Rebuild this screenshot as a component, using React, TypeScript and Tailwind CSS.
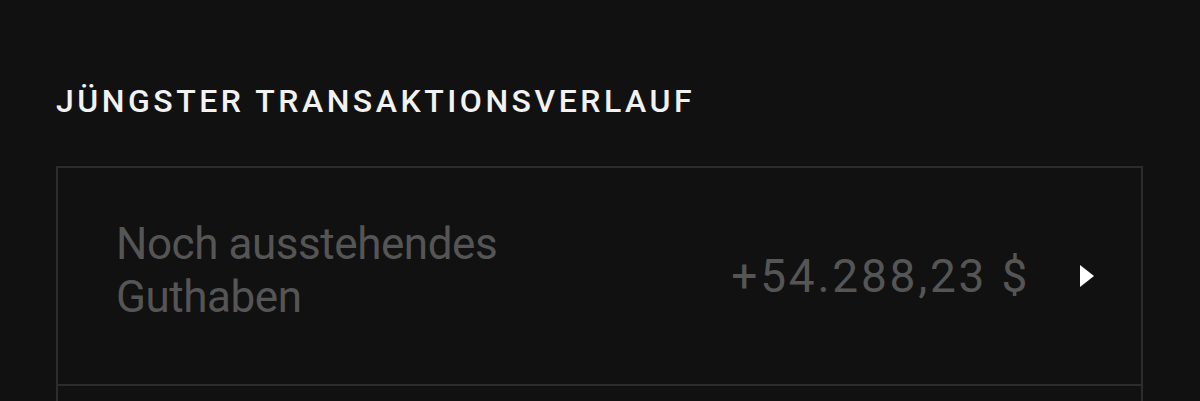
const rows = [
  { label: "Noch ausstehendes Guthaben", amount: "+54.288,23 $" },
  { label: "", amount: "" },
];

function Caret() {
  return (
    <svg width="14" height="22" viewBox="0 0 14 22" className="shrink-0">
      <path d="M0 0 L14 11 L0 22 Z" fill="#ffffff" />
    </svg>
  );
}

export default function App() {
  return (
    <div className="h-[401px] overflow-hidden bg-[#111111] pl-[56px] pr-[57px] pt-[81px] font-['Roboto',sans-serif]">
      <h2 className="text-[32px] leading-[40px] font-medium uppercase tracking-[0.11em] text-[#f2f2f2]">
        Jüngster Transaktionsverlauf
      </h2>

      <div className="mt-[45px] border-2 border-[#2c2c2c]">
        {/* first row */}
        <div className="flex h-[218px] items-center border-b-2 border-[#2c2c2c] pl-[58px] pr-[47px]">
          <p className="mb-[10px] w-[440px] text-[44px] leading-[53px] tracking-[-0.01em] text-[#555555]">
            {rows[0].label}
          </p>
          <div className="ml-auto flex items-center gap-[50px]">
            <span className="text-[46px] leading-[53px] tracking-[0.06em] text-[#555555]">
              {rows[0].amount}
            </span>
            <Caret />
          </div>
        </div>
        {/* next row, cut off */}
        <div className="h-[120px]" />
      </div>
    </div>
  );
}
